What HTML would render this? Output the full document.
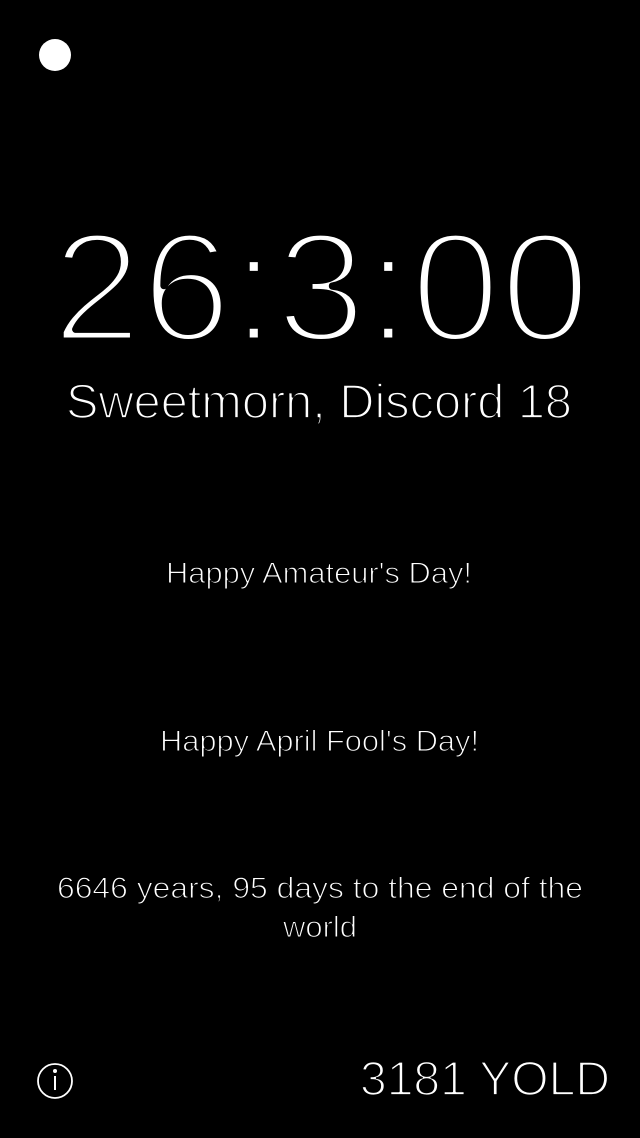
<!DOCTYPE html>
<html><head><meta charset="utf-8"><style>
html,body{margin:0;padding:0;background:#000;width:640px;height:1138px;overflow:hidden}
svg{display:block}
text{font-family:"Liberation Sans",sans-serif;fill:#fff;stroke:#000;paint-order:normal;stroke-linejoin:round}
</style></head><body>
<svg width="640" height="1138" viewBox="0 0 640 1138">
<rect width="640" height="1138" fill="#000"/>
<circle cx="55" cy="55" r="16" fill="#fff"/>
<text x="52" y="341" font-size="156" textLength="538" lengthAdjust="spacingAndGlyphs" stroke-width="7">26:3:00</text>
<text x="66" y="418" font-size="48" textLength="506" lengthAdjust="spacingAndGlyphs" stroke-width="1.8">Sweetmorn, Discord 18</text>
<text x="166" y="583" font-size="30" textLength="306" lengthAdjust="spacingAndGlyphs" stroke-width="1.1">Happy Amateur's Day!</text>
<text x="160" y="751" font-size="30" textLength="319" lengthAdjust="spacingAndGlyphs" stroke-width="1.1">Happy April Fool's Day!</text>
<text x="57" y="898" font-size="30" textLength="526" lengthAdjust="spacingAndGlyphs" stroke-width="1.1">6646 years, 95 days to the end of the</text>
<text x="283" y="937" font-size="30" textLength="74" lengthAdjust="spacingAndGlyphs" stroke-width="1.1">world</text>
<circle cx="55" cy="1081" r="17" fill="none" stroke="#fff" stroke-width="1.8"/>
<circle cx="55" cy="1071" r="2" fill="#fff"/>
<rect x="54" y="1076" width="2" height="14" fill="#fff"/>
<text x="360" y="1095" font-size="48" textLength="250" lengthAdjust="spacingAndGlyphs" stroke-width="1.8">3181 YOLD</text>
</svg>
</body></html>
